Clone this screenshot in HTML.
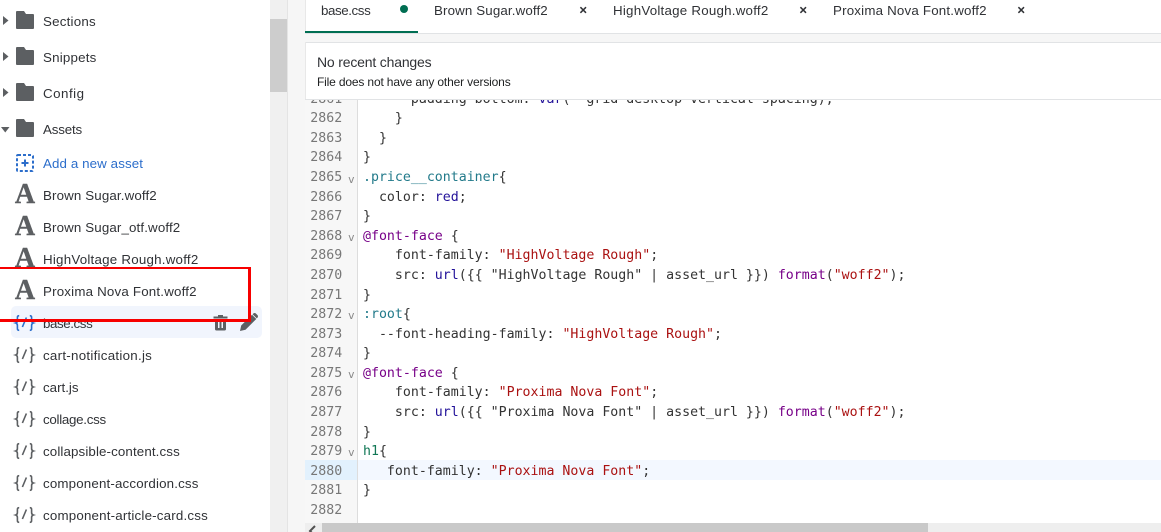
<!DOCTYPE html>
<html><head><meta charset="utf-8">
<style>
html,body{margin:0;padding:0;width:1161px;height:532px;overflow:hidden;background:#fff}
body{position:relative;font-family:"Liberation Sans",sans-serif;color:#202223}
.a{position:absolute}
.t{position:absolute;left:43px;height:20px;line-height:20px;font-size:13.33px;white-space:nowrap;color:#303236}
.tab{position:absolute;top:1px;height:20px;line-height:20px;font-size:13.33px;white-space:nowrap;color:#303236}
.A{position:absolute;left:14px;width:22px;text-align:center;height:30px;line-height:30px;font-family:"Liberation Serif",serif;font-weight:bold;font-size:28px;color:#5c5f62;-webkit-text-stroke:.4px #5c5f62}
pre{margin:0;font-family:"DejaVu Sans Mono",monospace;font-size:13.25px;line-height:19.6px}
.f{position:absolute;left:43px;font:11px/12px "DejaVu Sans Mono",monospace;color:#888}
.k{color:#770088}.s{color:#aa1111}.v{color:#221199}.q{color:#227a8a}.g{color:#117755}
svg{position:absolute;overflow:visible}
</style></head><body>
<svg width="0" height="0" style="left:0;top:0"><defs>
<symbol id="f" viewBox="0 0 18 18" overflow="visible"><path d="M1 0h7l2 3h7a1 1 0 0 1 1 1v13a1 1 0 0 1-1 1H1a1 1 0 0 1-1-1V1a1 1 0 0 1 1-1z" fill="#5c5f62"/></symbol>
<symbol id="c" viewBox="0 0 20 16" overflow="visible"><path d="M4.200.7C2.400.7 2.400 1.600 2.400 3v2.600C2.400 7 1.700 7.700.7 8c1 .3 1.700 1 1.700 2.400V13c0 1.400 0 2.300 1.800 2.300M14.800.7c1.800 0 1.800.9 1.800 2.300v2.600c0 1.400.7 2.100 1.700 2.400-1 .3-1.700 1-1.700 2.400V13c0 1.400 0 2.300-1.800 2.300M11.400 2.500L7.400 12" fill="none" stroke="currentColor" stroke-width="1.600"/></symbol>
</defs></svg>

<!-- sidebar -->
<div class="a" style="left:270px;top:0;width:17px;height:532px;background:#f0f0f0"></div>
<div class="a" style="left:270px;top:19px;width:17px;height:73px;background:#cdcdcd"></div>
<div class="a" style="left:287px;top:0;width:1px;height:532px;background:#e4e4e4"></div>
<div class="a" style="left:288px;top:0;width:17px;height:532px;background:#f6f6f6"></div>

<svg style="left:3px;top:16px" width="6" height="9"><path d="M0 0L5.500 4.500L0 9z" fill="#5c5f62"/></svg>
<svg style="left:3px;top:52px" width="6" height="9"><path d="M0 0L5.500 4.500L0 9z" fill="#5c5f62"/></svg>
<svg style="left:3px;top:88px" width="6" height="9"><path d="M0 0L5.500 4.500L0 9z" fill="#5c5f62"/></svg>
<svg style="left:1px;top:127px" width="9" height="6"><path d="M0 0H8.500L4.250 5.500z" fill="#5c5f62"/></svg>
<svg style="left:16px;top:11px" width="18" height="18"><use href="#f" width="18" height="18"/></svg>
<svg style="left:16px;top:47px" width="18" height="18"><use href="#f" width="18" height="18"/></svg>
<svg style="left:16px;top:83px" width="18" height="18"><use href="#f" width="18" height="18"/></svg>
<svg style="left:16px;top:119px" width="18" height="18"><use href="#f" width="18" height="18"/></svg>
<svg style="left:16px;top:154px" width="18" height="18"><rect x="1" y="1" width="16" height="16" rx="1" fill="none" stroke="#2c6ecb" stroke-width="2" stroke-dasharray="3 2"/><path d="M9 5.500v7M5.500 9h7" stroke="#2c6ecb" stroke-width="2"/></svg>

<div class="t" style="top:12px;letter-spacing:.22px">Sections</div>
<div class="t" style="top:48px;letter-spacing:.21px">Snippets</div>
<div class="t" style="top:84px;letter-spacing:.5px">Config</div>
<div class="t" style="top:120px;letter-spacing:-.17px">Assets</div>
<div class="t" style="top:154px;color:#2c6ecb;letter-spacing:.1px">Add a new asset</div>

<div class="a" style="left:11px;top:306px;width:251px;height:32px;background:#f1f5fd;border-radius:5px"></div>

<div class="A" style="top:180px">A</div>
<div class="A" style="top:212px">A</div>
<div class="A" style="top:244px">A</div>
<div class="A" style="top:276px">A</div>
<div class="t" style="top:186px;letter-spacing:.13px">Brown Sugar.woff2</div>
<div class="t" style="top:218px;letter-spacing:.13px">Brown Sugar_otf.woff2</div>
<div class="t" style="top:250px;letter-spacing:.23px">HighVoltage Rough.woff2</div>
<div class="t" style="top:282px;letter-spacing:.19px">Proxima Nova Font.woff2</div>
<div class="t" style="top:314px;letter-spacing:-.41px">base.css</div>
<div class="t" style="top:346px;letter-spacing:.27px">cart-notification.js</div>
<div class="t" style="top:378px">cart.js</div>
<div class="t" style="top:410px;letter-spacing:-.28px">collage.css</div>
<div class="t" style="top:442px;letter-spacing:.12px">collapsible-content.css</div>
<div class="t" style="top:474px;letter-spacing:.16px">component-accordion.css</div>
<div class="t" style="top:506px;letter-spacing:.19px">component-article-card.css</div>

<svg style="left:15px;top:315px;color:#2c6ecb" width="20" height="16"><use href="#c" width="20" height="16"/></svg>
<svg style="left:15px;top:347px;color:#5c5f62" width="20" height="16"><use href="#c" width="20" height="16"/></svg>
<svg style="left:15px;top:379px;color:#5c5f62" width="20" height="16"><use href="#c" width="20" height="16"/></svg>
<svg style="left:15px;top:411px;color:#5c5f62" width="20" height="16"><use href="#c" width="20" height="16"/></svg>
<svg style="left:15px;top:443px;color:#5c5f62" width="20" height="16"><use href="#c" width="20" height="16"/></svg>
<svg style="left:15px;top:475px;color:#5c5f62" width="20" height="16"><use href="#c" width="20" height="16"/></svg>
<svg style="left:15px;top:507px;color:#5c5f62" width="20" height="16"><use href="#c" width="20" height="16"/></svg>

<!-- trash -->
<svg style="left:213px;top:315px" width="15" height="16"><path d="M5 0h5v1.500h4.500V3.500H.5V1.500H5zM2 5h11v9a1.500 1.500 0 0 1-1.500 1.500h-8A1.500 1.500 0 0 1 2 14zM5 6.500v6.500h1.500V6.500zM8.500 6.500v6.500H10V6.500z" fill="#5c5f62" fill-rule="evenodd"/></svg>
<!-- pencil -->
<svg style="left:240px;top:313px" width="18" height="18"><path d="M0 18l1.200-5.500L12 1.700l4.300 4.300L5.500 16.800zM13.200.6c.8-.8 2-.8 2.800 0l1.400 1.400c.8.8.8 2 0 2.800l-.6.600-4.200-4.200z" fill="#5c5f62"/></svg>

<!-- red box -->
<div class="a" style="left:-6px;top:267px;width:251px;height:50px;border:3px solid #f70000;border-top-width:2.500px;background:transparent;box-sizing:content-box"></div>

<!-- main panel -->
<div class="a" style="left:305px;top:0;width:856px;height:34px;background:#fff"></div>
<div class="a" style="left:305px;top:33px;width:856px;height:1px;background:#e1e3e5"></div>
<div class="a" style="left:305px;top:0;width:1px;height:34px;background:#e8e8e8"></div>
<div class="a" style="left:305px;top:31px;width:113px;height:2px;background:#006e52"></div>
<div class="tab" style="left:321px;letter-spacing:-.41px">base.css</div>
<div class="a" style="left:400px;top:5px;width:8px;height:8px;border-radius:50%;background:#006e52"></div>
<div class="tab" style="left:434px;letter-spacing:.13px">Brown Sugar.woff2</div>
<div class="tab" style="left:613px;letter-spacing:.23px">HighVoltage Rough.woff2</div>
<div class="tab" style="left:833px;letter-spacing:.19px">Proxima Nova Font.woff2</div>
<svg style="left:580px;top:7px" width="7" height="6"><path d="M.4.2L6 5.800M6 .2L.4 5.800" stroke="#303236" stroke-width="1.500"/></svg>
<svg style="left:800px;top:7px" width="7" height="6"><path d="M.4.2L6 5.800M6 .2L.4 5.800" stroke="#303236" stroke-width="1.500"/></svg>
<svg style="left:1018px;top:7px" width="7" height="6"><path d="M.4.2L6 5.800M6 .2L.4 5.800" stroke="#303236" stroke-width="1.500"/></svg>

<div class="a" style="left:305px;top:34px;width:856px;height:8px;background:#f6f6f6"></div>
<div class="a" style="left:305px;top:42px;width:856px;height:1px;background:#e1e3e5"></div>
<div class="a" style="left:305px;top:43px;width:856px;height:56px;background:#fff"></div>
<div class="a" style="left:305px;top:42px;width:1px;height:58px;background:#e8e8e8"></div>
<div class="a" style="left:317px;top:52px;height:20px;line-height:20px;font-size:14px;letter-spacing:-.18px;white-space:nowrap;color:#303236">No recent changes</div>
<div class="a" style="left:317px;top:73px;height:18px;line-height:18px;font-size:12px;letter-spacing:-.16px;white-space:nowrap;color:#202223">File does not have any other versions</div>
<div class="a" style="left:305px;top:99px;width:856px;height:1px;background:#e1e3e5"></div>

<!-- editor -->
<div class="a" style="left:305px;top:100px;width:856px;height:423px;overflow:hidden;background:#fff">
  <div class="a" style="left:0;top:0;width:52px;height:423px;background:#f7f7f7;border-right:1px solid #ddd"></div>
  <div class="a" style="left:0;top:360px;width:52px;height:20px;background:#e2f1fd"></div>
  <div class="a" style="left:53px;top:360px;width:803px;height:20px;background:#f3f8ff"></div>
  <pre class="a" style="left:5px;top:-10.450px;width:32.200px;text-align:right;color:#777">2861
2862
2863
2864
2865
2866
2867
2868
2869
2870
2871
2872
2873
2874
2875
2876
2877
2878
2879
2880
2881
2882</pre>
  <div class="f" style="top:74px">v</div>
  <div class="f" style="top:132px">v</div>
  <div class="f" style="top:210px">v</div>
  <div class="f" style="top:269px">v</div>
  <div class="f" style="top:347px">v</div>
  <pre class="a" style="left:58px;top:-10.450px;color:#333">      padding-bottom: <span class="v">var</span>(--grid-desktop-vertical-spacing);
    }
  }
}
<span class="q">.price__container</span>{
  color: <span class="v">red</span>;
}
<span class="k">@font-face</span> {
    font-family: <span class="s">"HighVoltage Rough"</span>;
    src: <span class="v">url</span>({{ "HighVoltage Rough" | asset_url }}) <span class="k">format</span>(<span class="s">"woff2"</span>);
}
<span class="q">:root</span>{
  --font-heading-family: <span class="s">"HighVoltage Rough"</span>;
}
<span class="k">@font-face</span> {
    font-family: <span class="s">"Proxima Nova Font"</span>;
    src: <span class="v">url</span>({{ "Proxima Nova Font" | asset_url }}) <span class="k">format</span>(<span class="s">"woff2"</span>);
}
<span class="g">h1</span>{
   font-family: <span class="s">"Proxima Nova Font"</span>;
}
</pre>
</div>

<!-- bottom scrollbar -->
<div class="a" style="left:305px;top:523px;width:856px;height:9px;background:#eee"></div>
<div class="a" style="left:322px;top:523px;width:606px;height:9px;background:#c9c9c9"></div>
<svg style="left:309px;top:526px" width="8" height="6"><path d="M6 0L1 5l5 5" fill="none" stroke="#505050" stroke-width="2"/></svg>
</body></html>
